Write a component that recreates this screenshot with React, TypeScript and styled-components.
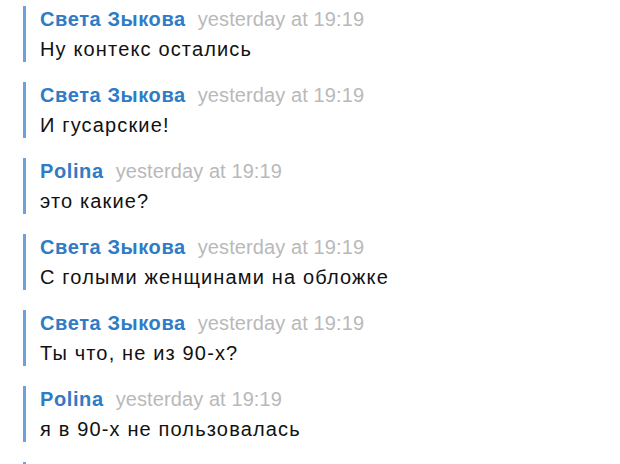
import React from 'react';
import styled, { createGlobalStyle } from 'styled-components';

const GlobalStyle = createGlobalStyle`
  html, body {
    margin: 0;
    padding: 0;
    background: #ffffff;
  }
  body {
    font-family: "Liberation Sans", Arial, Helvetica, sans-serif;
    -webkit-font-smoothing: antialiased;
  }
`;

interface IMessage {
  author: string;
  time: string;
  text: string;
}

const messages: IMessage[] = [
  { author: 'Света Зыкова', time: 'yesterday at 19:19', text: 'Ну контекс остались' },
  { author: 'Света Зыкова', time: 'yesterday at 19:19', text: 'И гусарские!' },
  { author: 'Polina', time: 'yesterday at 19:19', text: 'это какие?' },
  { author: 'Света Зыкова', time: 'yesterday at 19:19', text: 'С голыми женщинами на обложке' },
  { author: 'Света Зыкова', time: 'yesterday at 19:19', text: 'Ты что, не из 90-х?' },
  { author: 'Polina', time: 'yesterday at 19:19', text: 'я в 90-х не пользовалась' },
];

const Feed = styled.div`
  display: flex;
  flex-direction: column;
  gap: 20px;
  padding: 6px 0 0 23px;
  height: 464px;
  overflow: hidden;
  box-sizing: border-box;
`;

const Message = styled.div`
  display: flex;
  flex-direction: column;
  gap: 4px;
  border-left: 3px solid #6aa3dc;
  padding-left: 14px;
  min-height: 56px;
  flex-shrink: 0;
  box-sizing: border-box;
`;

const Header = styled.div`
  display: flex;
  align-items: baseline;
  gap: 12px;
  line-height: 26px;
  font-size: 20px;
  white-space: nowrap;
`;

const Author = styled.span`
  font-weight: bold;
  color: #2f7bc6;
  letter-spacing: 0.6px;
`;

const Time = styled.span`
  color: #b9b9b9;
  letter-spacing: 0.1px;
`;

const Text = styled.div`
  font-size: 20px;
  line-height: 26px;
  color: #111111;
  letter-spacing: 1.15px;
  white-space: nowrap;
`;

export default function App(): React.ReactElement {
  return (
    <>
      <GlobalStyle />
      <Feed>
        {messages.map((m, i) => (
          <Message key={i}>
            <Header>
              <Author>{m.author}</Author>
              <Time>{m.time}</Time>
            </Header>
            <Text>{m.text}</Text>
          </Message>
        ))}
        <Message />
      </Feed>
    </>
  );
}
